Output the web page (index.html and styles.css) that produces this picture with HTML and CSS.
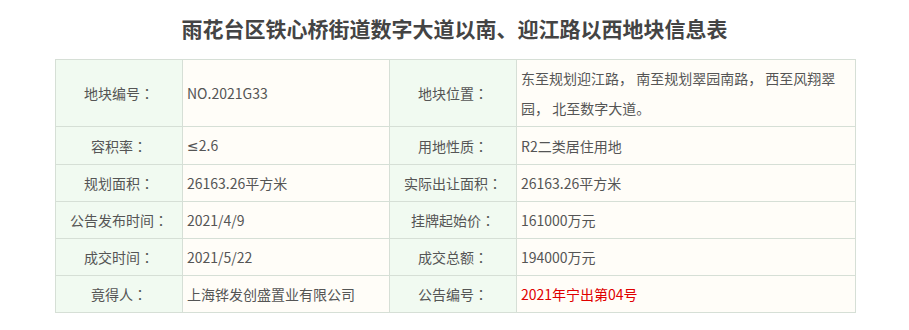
FILE: index.html
```html
<!DOCTYPE html>
<html lang="zh-CN">
<head>
<meta charset="utf-8">
<link rel="stylesheet" href="styles.css">
</head>
<body>
<div class="page">
  <h1 class="title">雨花台区铁心桥街道数字大道以南、迎江路以西地块信息表</h1>
  <table class="info">
    <colgroup>
      <col class="c1"><col class="c2"><col class="c3"><col class="c4">
    </colgroup>
    <tr class="tall">
      <td class="lbl">地块编号<span class="colon" lang="zh-TW">：</span></td><td class="val">NO.2021G33</td>
      <td class="lbl">地块位置<span class="colon" lang="zh-TW">：</span></td><td class="val">东至规划迎江路， 南至规划翠园南路， 西至风翔翠园， 北至数字大道。</td>
    </tr>
    <tr>
      <td class="lbl">容积率<span class="colon" lang="zh-TW">：</span></td><td class="val"><span class="latin">≤</span>2.6</td>
      <td class="lbl">用地性质<span class="colon" lang="zh-TW">：</span></td><td class="val">R2二类居住用地</td>
    </tr>
    <tr>
      <td class="lbl">规划面积<span class="colon" lang="zh-TW">：</span></td><td class="val">26163.26平方米</td>
      <td class="lbl">实际出让面积<span class="colon" lang="zh-TW">：</span></td><td class="val">26163.26平方米</td>
    </tr>
    <tr>
      <td class="lbl">公告发布时间<span class="colon" lang="zh-TW">：</span></td><td class="val">2021/4/9</td>
      <td class="lbl">挂牌起始价<span class="colon" lang="zh-TW">：</span></td><td class="val">161000万元</td>
    </tr>
    <tr>
      <td class="lbl">成交时间<span class="colon" lang="zh-TW">：</span></td><td class="val">2021/5/22</td>
      <td class="lbl">成交总额<span class="colon" lang="zh-TW">：</span></td><td class="val">194000万元</td>
    </tr>
    <tr>
      <td class="lbl">竟得人<span class="colon" lang="zh-TW">：</span></td><td class="val">上海铧发创盛置业有限公司</td>
      <td class="lbl">公告编号<span class="colon" lang="zh-TW">：</span></td><td class="val red">2021年宁出第04号</td>
    </tr>
  </table>
</div>
</body>
</html>
```

FILE: styles.css
```css
html, body {
  margin: 0;
  padding: 0;
  background: #ffffff;
}
.page {
  width: 909px;
  padding-top: 13px;
  font-family: "Noto Sans CJK SC", "Noto Sans", sans-serif;
}
.title {
  margin: 0;
  text-align: center;
  font-size: 21px;
  line-height: 30px;
  font-weight: bold;
  color: #444444;
}
.info {
  margin: 16px 0 0 55px;
  width: 800px;
  border-collapse: collapse;
  table-layout: fixed;
  font-size: 14px;
  color: #555555;
}
.c1 { width: 127px; }
.c2 { width: 207px; }
.c3 { width: 127px; }
.c4 { width: 339px; }
.info td {
  border: 1px solid #d6dfd6;
  padding: 3px 4px;
  line-height: 30px;
  vertical-align: middle;
}
.lbl {
  background: #f1faf1;
  text-align: center;
}
.colon {
  font-family: "Noto Sans CJK TC", "Noto Sans CJK SC", sans-serif;
}
.latin {
  font-family: "Noto Sans", "DejaVu Sans", sans-serif;
}
.val {
  background: #fffdf8;
  text-align: left;
}
.red {
  color: #e00000;
}
```
